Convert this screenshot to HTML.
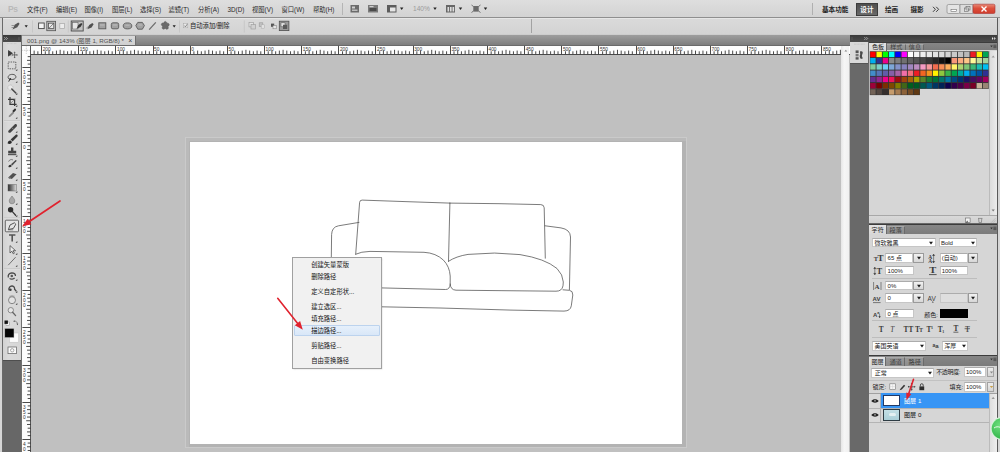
<!DOCTYPE html>
<html lang="zh-CN">
<head>
<meta charset="utf-8">
<title>Photoshop CS5 - 001.png</title>
<style>
*{margin:0;padding:0;box-sizing:border-box}
html,body{width:1000px;height:452px;overflow:hidden;background:#c0c0c0}
body{font-family:"Liberation Sans","Noto Sans CJK SC",sans-serif;font-size:6.3px;color:#222;position:relative}
#app{position:absolute;left:0;top:0;width:1000px;height:452px;overflow:hidden;background:#c0c0c0}
#app div,#app svg.abs{position:absolute}
.t{height:10px;line-height:10px;white-space:nowrap;color:#2a2a2a}
.w{color:#fff}
.b{font-weight:bold}
.rl{font-size:4.8px;color:#333;height:8px;line-height:8px}
</style>
</head>
<body>
<div id="app">
<!-- application bar -->
<div style="left:0.0px;top:0.0px;width:1000.0px;height:17.0px;background:linear-gradient(#dedede,#d3d3d3);"></div>
<div style="left:0.0px;top:17.0px;width:1000.0px;height:1.0px;background:#8f8f8f;"></div>
<div class="t b" style="left:8px;top:3.5px;font-size:8.5px;color:#b9b9b9;letter-spacing:-0.3px">Ps</div>
<div class="t " style="left:27.0px;top:4.6px;">文件(F)</div>
<div class="t " style="left:56.0px;top:4.6px;">编辑(E)</div>
<div class="t " style="left:84.5px;top:4.6px;">图像(I)</div>
<div class="t " style="left:112.0px;top:4.6px;">图层(L)</div>
<div class="t " style="left:140.0px;top:4.6px;">选择(S)</div>
<div class="t " style="left:168.5px;top:4.6px;">滤镜(T)</div>
<div class="t " style="left:198.0px;top:4.6px;">分析(A)</div>
<div class="t " style="left:227.5px;top:4.6px;">3D(D)</div>
<div class="t " style="left:252.0px;top:4.6px;">视图(V)</div>
<div class="t " style="left:281.5px;top:4.6px;">窗口(W)</div>
<div class="t " style="left:313.0px;top:4.6px;">帮助(H)</div>
<div style="left:341.5px;top:3.0px;width:1.0px;height:12.0px;background:#b5b5b5;"></div>
<svg class="abs" style="left:349px;top:3px" width="150" height="12" viewBox="349 3 150 12"><rect x="350.5" y="5" width="8.5" height="7.5" fill="#6b6b6b"/><rect x="352" y="6.5" width="3" height="2" fill="#cfcfcf"/><rect x="352" y="9.5" width="5.5" height="1.5" fill="#bdbdbd"/><rect x="368" y="5" width="10" height="7.5" fill="#7a7a7a"/><rect x="369.5" y="8" width="7" height="3" fill="#4a4a4a"/><rect x="369.5" y="6" width="4" height="1.2" fill="#d0d0d0"/><rect x="387" y="5" width="9.5" height="7.5" fill="#5c5c5c"/><rect x="390" y="7.5" width="5.5" height="4" fill="#e6e6e6"/><path d="M400 7.5h3.4l-1.7 2.4z" fill="#222"/><path d="M433.3 7.5h3.4l-1.7 2.4z" fill="#222"/><rect x="446" y="5" width="9" height="7.5" fill="#666"/><rect x="447.5" y="7" width="1.6" height="4.5" fill="#ddd"/><rect x="450" y="7" width="1.6" height="4.5" fill="#ddd"/><rect x="452.5" y="7" width="1.6" height="4.5" fill="#ddd"/><path d="M458.8 7.5h3.4l-1.7 2.4z" fill="#222"/><path d="M471.5 5l2 1.5h5l2-1.5M471.5 12.5l2-1.5h5l2 1.5" stroke="#666" stroke-width="0.9" fill="none"/><rect x="473.3" y="6.3" width="5.4" height="5" fill="#6a6a6a"/><path d="M483.8 7.5h3.4l-1.7 2.4z" fill="#222"/></svg>
<div class="t " style="left:413.0px;top:4.3px;color:#9b9b9b;font-size:6.6px">140%</div>
<div style="left:812.0px;top:3.0px;width:1.0px;height:12.0px;background:#b0b0b0;"></div>
<div class="t b" style="left:822.0px;top:4.6px;color:#222;font-size:6.6px">基本功能</div>
<div style="left:856.0px;top:3.0px;width:21.5px;height:12.5px;background:linear-gradient(#4e4e4e,#6a6a6a);border:0.5px solid #3c3c3c"></div>
<div class="t b w" style="left:860.3px;top:4.6px;font-size:6.6px">设计</div>
<div class="t b" style="left:885.0px;top:4.6px;color:#222;font-size:6.6px">绘画</div>
<div class="t b" style="left:910.5px;top:4.6px;color:#222;font-size:6.6px">摄影</div>
<svg class="abs" style="left:931px;top:5px" width="10" height="9" viewBox="931 5 10 9"><path d="M933 6.800l2.400 2.500-2.400 2.500M936.200 6.800l2.400 2.500-2.400 2.500" stroke="#3c3c3c" stroke-width="1" fill="none"/></svg>
<svg class="abs" style="left:946px;top:3px" width="51" height="12" viewBox="946 3 51 12"><rect x="947" y="4.500" width="13" height="9" rx="1.500" fill="#e4e4e4" stroke="#8a8a8a" stroke-width="0.700"/><rect x="960" y="4.500" width="13" height="9" fill="#dcdcdc" stroke="#8a8a8a" stroke-width="0.700"/><defs><linearGradient id="cl" x1="0" y1="0" x2="0" y2="1"><stop offset="0" stop-color="#e88a76"/><stop offset="0.450" stop-color="#dc4f3c"/><stop offset="1" stop-color="#cf3d2c"/></linearGradient></defs><rect x="973" y="4.200" width="22" height="9.300" rx="1.500" fill="url(#cl)" stroke="#a33" stroke-width="0.600"/><rect x="951" y="9.500" width="5.500" height="2" fill="#fff" stroke="#555" stroke-width="0.500"/><rect x="964.500" y="8" width="4" height="3.500" fill="#eee" stroke="#666" stroke-width="0.600"/><rect x="966" y="6.500" width="4" height="3.500" fill="none" stroke="#666" stroke-width="0.600"/><path d="M981.500 6.500l5 5M986.500 6.500l-5 5" stroke="#fff" stroke-width="1.400"/></svg>
<!-- options bar -->
<div style="left:0.0px;top:18.0px;width:1000.0px;height:17.0px;background:linear-gradient(#dadada,#d3d3d3);"></div>
<div style="left:0.0px;top:33.6px;width:1000.0px;height:1.4px;background:#cdcdcd;"></div>
<div style="left:531.2px;top:18.5px;width:0.7px;height:14.5px;background:#a2a2a2;"></div>
<div style="left:0.0px;top:18.0px;width:1000.0px;height:0.8px;background:#e6e6e6;"></div>
<!-- tab bar -->
<div style="left:2.5px;top:35.0px;width:847.0px;height:10.6px;background:linear-gradient(#9e9e9e,#7a7a7a);"></div>
<div style="left:22.0px;top:35.5px;width:113.7px;height:10.0px;background:linear-gradient(#d9d9d9,#cfcfcf);border-right:0.6px solid #6e6e6e"></div>
<div class="t " style="left:27.0px;top:35.7px;color:#505050;font-size:6.200px;letter-spacing:-0.020px">001.png @ 143% (图层 1, RGB/8) *</div>
<div class="t " style="left:128.3px;top:35.6px;color:#444;font-size:7px">×</div>
<!-- rulers -->
<div style="left:22.0px;top:45.4px;width:827.5px;height:9.2px;background:#fdfdfd;border-top:0.6px solid #6a6a6a;border-bottom:0.6px solid #4a4a4a"></div>
<div style="left:22.0px;top:46.0px;width:8.7px;height:406.0px;background:#fdfdfd;border-right:0.6px solid #555"></div>
<svg class="abs" style="left:0;top:0" width="850" height="452" viewBox="0 0 850 452"><path d="M34.15 50.6V54.2M37.86 51.3V54.2M41.50 45.900V54.200M45.30 51.3V54.2M49.01 50.6V54.2M52.73 51.3V54.2M56.44 50.6V54.2M60.16 49.8V54.2M63.87 50.6V54.2M67.59 51.3V54.2M71.30 50.6V54.2M75.02 51.3V54.2M78.50 45.900V54.200M82.45 51.3V54.2M86.17 50.6V54.2M89.88 51.3V54.2M93.60 50.6V54.2M97.31 49.8V54.2M101.03 50.6V54.2M104.74 51.3V54.2M108.46 50.6V54.2M112.17 51.3V54.2M115.50 45.900V54.200M119.61 51.3V54.2M123.32 50.6V54.2M127.04 51.3V54.2M130.75 50.6V54.2M134.47 49.8V54.2M138.18 50.6V54.2M141.90 51.3V54.2M145.61 50.6V54.2M149.33 51.3V54.2M153.50 45.900V54.200M156.76 51.3V54.2M160.48 50.6V54.2M164.19 51.3V54.2M167.91 50.6V54.2M171.62 49.8V54.2M175.34 50.6V54.2M179.05 51.3V54.2M182.77 50.6V54.2M186.48 51.3V54.2M190.50 45.900V54.200M193.92 51.3V54.2M197.63 50.6V54.2M201.35 51.3V54.2M205.06 50.6V54.2M208.78 49.8V54.2M212.49 50.6V54.2M216.21 51.3V54.2M219.92 50.6V54.2M223.64 51.3V54.2M227.50 45.900V54.200M231.07 51.3V54.2M234.79 50.6V54.2M238.50 51.3V54.2M242.22 50.6V54.2M245.93 49.8V54.2M249.65 50.6V54.2M253.36 51.3V54.2M257.08 50.6V54.2M260.79 51.3V54.2M264.50 45.900V54.200M268.23 51.3V54.2M271.94 50.6V54.2M275.66 51.3V54.2M279.37 50.6V54.2M283.09 49.8V54.2M286.80 50.6V54.2M290.52 51.3V54.2M294.23 50.6V54.2M297.95 51.3V54.2M301.50 45.900V54.200M305.38 51.3V54.2M309.10 50.6V54.2M312.81 51.3V54.2M316.53 50.6V54.2M320.24 49.8V54.2M323.96 50.6V54.2M327.67 51.3V54.2M331.39 50.6V54.2M335.10 51.3V54.2M338.50 45.900V54.200M342.54 51.3V54.2M346.25 50.6V54.2M349.97 51.3V54.2M353.68 50.6V54.2M357.40 49.8V54.2M361.11 50.6V54.2M364.83 51.3V54.2M368.54 50.6V54.2M372.26 51.3V54.2M375.50 45.900V54.200M379.69 51.3V54.2M383.41 50.6V54.2M387.12 51.3V54.2M390.84 50.6V54.2M394.55 49.8V54.2M398.27 50.6V54.2M401.98 51.3V54.2M405.70 50.6V54.2M409.41 51.3V54.2M413.50 45.900V54.200M416.85 51.3V54.2M420.56 50.6V54.2M424.28 51.3V54.2M427.99 50.6V54.2M431.71 49.8V54.2M435.42 50.6V54.2M439.14 51.3V54.2M442.85 50.6V54.2M446.57 51.3V54.2M450.50 45.900V54.200M454.00 51.3V54.2M457.72 50.6V54.2M461.43 51.3V54.2M465.15 50.6V54.2M468.86 49.8V54.2M472.58 50.6V54.2M476.29 51.3V54.2M480.01 50.6V54.2M483.72 51.3V54.2M487.50 45.900V54.200M491.16 51.3V54.2M494.87 50.6V54.2M498.59 51.3V54.2M502.30 50.6V54.2M506.02 49.8V54.2M509.73 50.6V54.2M513.45 51.3V54.2M517.16 50.6V54.2M520.88 51.3V54.2M524.50 45.900V54.200M528.31 51.3V54.2M532.03 50.6V54.2M535.74 51.3V54.2M539.46 50.6V54.2M543.17 49.8V54.2M546.89 50.6V54.2M550.60 51.3V54.2M554.32 50.6V54.2M558.03 51.3V54.2M561.50 45.900V54.200M565.47 51.3V54.2M569.18 50.6V54.2M572.90 51.3V54.2M576.61 50.6V54.2M580.33 49.8V54.2M584.04 50.6V54.2M587.76 51.3V54.2M591.47 50.6V54.2M595.19 51.3V54.2M598.50 45.900V54.200M602.62 51.3V54.2M606.34 50.6V54.2M610.05 51.3V54.2M613.77 50.6V54.2M617.48 49.8V54.2M621.20 50.6V54.2M624.91 51.3V54.2M628.63 50.6V54.2M632.34 51.3V54.2M636.50 45.900V54.200M639.78 51.3V54.2M643.49 50.6V54.2M647.21 51.3V54.2M650.92 50.6V54.2M654.64 49.8V54.2M658.35 50.6V54.2M662.07 51.3V54.2M665.78 50.6V54.2M669.50 51.3V54.2M673.50 45.900V54.200M676.93 51.3V54.2M680.65 50.6V54.2M684.36 51.3V54.2M688.08 50.6V54.2M691.79 49.8V54.2M695.51 50.6V54.2M699.22 51.3V54.2M702.94 50.6V54.2M706.65 51.3V54.2M710.50 45.900V54.200M714.09 51.3V54.2M717.80 50.6V54.2M721.52 51.3V54.2M725.23 50.6V54.2M728.95 49.8V54.2M732.66 50.6V54.2M736.38 51.3V54.2M740.09 50.6V54.2M743.81 51.3V54.2M747.50 45.900V54.200M751.24 51.3V54.2M754.96 50.6V54.2M758.67 51.3V54.2M762.39 50.6V54.2M766.10 49.8V54.2M769.82 50.6V54.2M773.53 51.3V54.2M777.25 50.6V54.2M780.96 51.3V54.2M784.50 45.900V54.200M788.40 51.3V54.2M792.11 50.6V54.2M795.83 51.3V54.2M799.54 50.6V54.2M803.26 49.8V54.2M806.97 50.6V54.2M810.69 51.3V54.2M814.40 50.6V54.2M818.12 51.3V54.2M821.50 45.900V54.200M825.55 51.3V54.2M829.27 50.6V54.2M832.98 51.3V54.2M836.70 50.6V54.2M840.41 49.8V54.2" stroke="#2a2a2a" stroke-width="0.85" fill="none"/><path d="M27.7 56.64H30.6M27 60.36H30.6M27.7 64.07H30.6M22.4 67.50H30.4M27.7 71.51H30.6M27 75.22H30.6M27.7 78.94H30.6M27 82.65H30.6M26.2 86.37H30.6M27 90.08H30.6M27.7 93.80H30.6M27 97.51H30.6M27.7 101.23H30.6M22.4 104.50H30.4M27.7 108.66H30.6M27 112.38H30.6M27.7 116.09H30.6M27 119.81H30.6M26.2 123.52H30.6M27 127.24H30.6M27.7 130.95H30.6M27 134.67H30.6M27.7 138.38H30.6M22.4 142.50H30.4M27.7 145.82H30.6M27 149.53H30.6M27.7 153.25H30.6M27 156.96H30.6M26.2 160.68H30.6M27 164.39H30.6M27.7 168.11H30.6M27 171.82H30.6M27.7 175.54H30.6M22.4 179.50H30.4M27.7 182.97H30.6M27 186.69H30.6M27.7 190.40H30.6M27 194.12H30.6M26.2 197.83H30.6M27 201.55H30.6M27.7 205.26H30.6M27 208.98H30.6M27.7 212.69H30.6M22.4 216.50H30.4M27.7 220.13H30.6M27 223.84H30.6M27.7 227.56H30.6M27 231.27H30.6M26.2 234.99H30.6M27 238.70H30.6M27.7 242.42H30.6M27 246.13H30.6M27.7 249.85H30.6M22.4 253.50H30.4M27.7 257.28H30.6M27 261.00H30.6M27.7 264.71H30.6M27 268.43H30.6M26.2 272.14H30.6M27 275.86H30.6M27.7 279.57H30.6M27 283.29H30.6M27.7 287.00H30.6M22.4 290.50H30.4M27.7 294.44H30.6M27 298.15H30.6M27.7 301.87H30.6M27 305.58H30.6M26.2 309.30H30.6M27 313.01H30.6M27.7 316.73H30.6M27 320.44H30.6M27.7 324.16H30.6M22.4 327.50H30.4M27.7 331.59H30.6M27 335.31H30.6M27.7 339.02H30.6M27 342.74H30.6M26.2 346.45H30.6M27 350.17H30.6M27.7 353.88H30.6M27 357.60H30.6M27.7 361.31H30.6M22.4 365.50H30.4M27.7 368.75H30.6M27 372.46H30.6M27.7 376.18H30.6M27 379.89H30.6M26.2 383.61H30.6M27 387.32H30.6M27.7 391.04H30.6M27 394.75H30.6M27.7 398.47H30.6M22.4 402.50H30.4M27.7 405.90H30.6M27 409.62H30.6M27.7 413.33H30.6M27 417.05H30.6M26.2 420.76H30.6M27 424.48H30.6M27.7 428.19H30.6M27 431.91H30.6M27.7 435.62H30.6M22.4 439.50H30.4M27.7 443.06H30.6M27 446.77H30.6M27.7 450.49H30.6" stroke="#2a2a2a" stroke-width="0.85" fill="none"/><path d="M26.3 46.5V54M22.4 50.3H30.4" stroke="#888" stroke-width="0.5" stroke-dasharray="0.8 0.8" fill="none"/></svg>
<div class="t rl" style="left:42.7px;top:45.9px">200</div>
<div class="t rl" style="left:79.8px;top:45.9px">150</div>
<div class="t rl" style="left:117.0px;top:45.9px">100</div>
<div class="t rl" style="left:154.1px;top:45.9px">50</div>
<div class="t rl" style="left:191.3px;top:45.9px">0</div>
<div class="t rl" style="left:228.5px;top:45.9px">50</div>
<div class="t rl" style="left:265.6px;top:45.9px">100</div>
<div class="t rl" style="left:302.8px;top:45.9px">150</div>
<div class="t rl" style="left:339.9px;top:45.9px">200</div>
<div class="t rl" style="left:377.1px;top:45.9px">250</div>
<div class="t rl" style="left:414.2px;top:45.9px">300</div>
<div class="t rl" style="left:451.4px;top:45.9px">350</div>
<div class="t rl" style="left:488.5px;top:45.9px">400</div>
<div class="t rl" style="left:525.7px;top:45.9px">450</div>
<div class="t rl" style="left:562.9px;top:45.9px">500</div>
<div class="t rl" style="left:600.0px;top:45.9px">550</div>
<div class="t rl" style="left:637.2px;top:45.9px">600</div>
<div class="t rl" style="left:674.3px;top:45.9px">650</div>
<div class="t rl" style="left:711.5px;top:45.9px">700</div>
<div class="t rl" style="left:748.6px;top:45.9px">750</div>
<div class="t rl" style="left:785.8px;top:45.9px">800</div>
<div class="t rl" style="left:822.9px;top:45.9px">850</div>
<div class="t rl" style="left:23px;top:69.3px">1</div>
<div class="t rl" style="left:23px;top:74.3px">0</div>
<div class="t rl" style="left:23px;top:79.3px">0</div>
<div class="t rl" style="left:23px;top:106.4px">5</div>
<div class="t rl" style="left:23px;top:111.4px">0</div>
<div class="t rl" style="left:23px;top:143.6px">0</div>
<div class="t rl" style="left:23px;top:180.8px">5</div>
<div class="t rl" style="left:23px;top:185.8px">0</div>
<div class="t rl" style="left:23px;top:217.9px">1</div>
<div class="t rl" style="left:23px;top:222.9px">0</div>
<div class="t rl" style="left:23px;top:227.9px">0</div>
<div class="t rl" style="left:23px;top:255.1px">1</div>
<div class="t rl" style="left:23px;top:260.1px">5</div>
<div class="t rl" style="left:23px;top:265.1px">0</div>
<div class="t rl" style="left:23px;top:292.2px">2</div>
<div class="t rl" style="left:23px;top:297.2px">0</div>
<div class="t rl" style="left:23px;top:302.2px">0</div>
<div class="t rl" style="left:23px;top:329.4px">2</div>
<div class="t rl" style="left:23px;top:334.4px">5</div>
<div class="t rl" style="left:23px;top:339.4px">0</div>
<div class="t rl" style="left:23px;top:366.5px">3</div>
<div class="t rl" style="left:23px;top:371.5px">0</div>
<div class="t rl" style="left:23px;top:376.5px">0</div>
<div class="t rl" style="left:23px;top:403.7px">3</div>
<div class="t rl" style="left:23px;top:408.7px">5</div>
<div class="t rl" style="left:23px;top:413.7px">0</div>
<div class="t rl" style="left:23px;top:440.8px">4</div>
<div class="t rl" style="left:23px;top:445.8px">0</div>
<div class="t rl" style="left:23px;top:450.8px">0</div>
<!-- canvas + document -->
<div style="left:31.0px;top:54.8px;width:810.3px;height:398.0px;background:#c0c0c0;"></div>
<div style="left:841.3px;top:46.0px;width:8.2px;height:406.0px;background:linear-gradient(90deg,#e6e6e6,#f6f6f6 40%,#f0f0f0);"></div>
<svg class="abs" style="left:842px;top:47px" width="8" height="8" viewBox="0 0 8 8"><path d="M2.400 4.600L3.800 2.800L5.200 4.600z" fill="#8a8a8a"/></svg>
<div style="left:185.4px;top:137.2px;width:501.4px;height:310.8px;background:#cacaca;"></div>
<div style="left:186.4px;top:138.2px;width:499.4px;height:308.8px;background:#b3b3b3;border-top:3.400px solid #bababa;border-left:3.600px solid #bababa"></div>
<div style="left:190.0px;top:141.6px;width:492.0px;height:302.0px;background:#fff;"></div>
<!-- options bar icons -->
<svg class="abs" style="left:0;top:18px" width="300" height="17" viewBox="0 18 300 17"><path d="M12.5 29.5l2.2-4.8 3.6-2.2 1.3 1.2-2.3 3.600z" fill="#555"/><path d="M11.500 25.500h3M11.500 27.500h2.400" stroke="#777" stroke-width="0.700"/><path d="M24.600 25.300h3.200l-1.600 2.300z" fill="#222"/><path d="M32.500 20.500v12" stroke="#bdbdbd" stroke-width="0.600"/><rect x="38.600" y="23" width="5.600" height="5.600" fill="#f4f4f4" stroke="#444" stroke-width="0.900"/><rect x="46.800" y="21.300" width="8.800" height="9.400" fill="#bcbcbc" stroke="#555" stroke-width="0.800"/><rect x="48.600" y="23.200" width="5.200" height="5.400" fill="#e9e9e9" stroke="#444" stroke-width="0.700"/><path d="M49 28.200l4.400-4.600" stroke="#555" stroke-width="0.700"/><rect x="59.800" y="23.400" width="4.600" height="5" fill="#ececec" stroke="#a8a8a8" stroke-width="0.700"/><path d="M68.300 20.500v12" stroke="#bdbdbd" stroke-width="0.600"/><rect x="71.200" y="21" width="12" height="10" fill="#c2c2c2" stroke="#4a4a4a" stroke-width="0.900"/><rect x="72.600" y="22.600" width="5.400" height="6.400" fill="#e6e6e6" stroke="#666" stroke-width="0.600"/><path d="M76.500 29l1.800-4 3-1.900 1.100 1-1.900 3z" fill="#3a3a3a"/><path d="M87.300 29.300l1.900-4.200 3.200-2 1.200 1.100-2 3.200z" fill="#505050"/><path d="M86.300 28.500c1-2.500 2-0.500 3-2.500" stroke="#666" stroke-width="0.600" fill="none"/><rect x="98.800" y="22.800" width="7" height="6" fill="#a2a2a2" stroke="#5a5a5a" stroke-width="0.900"/><path d="M100 25h4.600" stroke="#c4c4c4" stroke-width="0.800"/><rect x="111.300" y="22.800" width="7.400" height="6" rx="1.600" fill="#a2a2a2" stroke="#5a5a5a" stroke-width="0.900"/><path d="M113 25h4" stroke="#c4c4c4" stroke-width="0.800"/><ellipse cx="127.500" cy="25.900" rx="4.300" ry="3" fill="#a2a2a2" stroke="#5a5a5a" stroke-width="0.900"/><path d="M125.500 25.200h4" stroke="#c4c4c4" stroke-width="0.800"/><path d="M137.800 22.400h4.600l2 3.200-2 3.600h-4.600l-2-3.600z" fill="#a2a2a2" stroke="#5a5a5a" stroke-width="0.900"/><path d="M138.300 25h3.600" stroke="#c4c4c4" stroke-width="0.800"/><path d="M149.200 29.600l6.600-7.200" stroke="#6c6c6c" stroke-width="1.300"/><path d="M165.200 21.400c1 0 1.400.8 1.600 1.800 1-.2 2.200.2 2.400 1.200.2 1-.6 1.600-1.400 2 .6.8.8 2-.2 2.600-1 .600-1.800 0-2.400-.800-.600.800-1.600 1.400-2.600.600-.800-.800-.400-1.800.200-2.600-1-.400-1.800-1.200-1.400-2.200.400-1 1.400-1.200 2.400-.800.200-1 .600-1.800 1.400-1.800z" fill="#6a6a6a" stroke="#565656" stroke-width="0.500"/><path d="M172.600 25.300h3.200l-1.600 2.300z" fill="#222"/><path d="M179.500 20.500v12" stroke="#bdbdbd" stroke-width="0.600"/><rect x="183.600" y="23.400" width="4.200" height="4.400" fill="#e8e8e8" stroke="#a5a5a5" stroke-width="0.500"/><path d="M184.400 25.600l1 1.300 1.900-2.800" stroke="#666" stroke-width="0.700" fill="none"/><path d="M244.300 20.500v12" stroke="#bdbdbd" stroke-width="0.600"/><rect x="249" y="22.500" width="4.400" height="4.400" fill="#e4e4e4" stroke="#999" stroke-width="0.600"/><rect x="251" y="24.600" width="4.400" height="4.400" fill="#d0d0d0" stroke="#999" stroke-width="0.600"/><rect x="259.200" y="22.800" width="3.600" height="3.600" fill="#c2c2c2" stroke="#999" stroke-width="0.600"/><rect x="261.200" y="24.800" width="3.400" height="3.400" fill="#e2e2e2" stroke="#aaa" stroke-width="0.500"/><rect x="271" y="23.600" width="3.200" height="3.200" fill="#555"/><rect x="273" y="25.600" width="3.200" height="3.200" fill="#e6e6e6" stroke="#777" stroke-width="0.500"/><rect x="279.300" y="21.200" width="9.600" height="9.400" fill="#9a9a9a" stroke="#505050" stroke-width="0.800"/><rect x="281" y="22.800" width="4" height="4" fill="#e2e2e2" stroke="#555" stroke-width="0.500"/><rect x="283" y="24.800" width="4.200" height="4.200" fill="#5a5a5a"/></svg>
<div class="t " style="left:190.0px;top:20.8px;color:#1e1e1e;font-size:6.3px">自动添加/删除</div>
<!-- toolbox -->
<div style="left:0.0px;top:17.5px;width:2.0px;height:435.0px;background:#d6d6d6;"></div>
<div style="left:2.0px;top:17.5px;width:0.7px;height:435.0px;background:#6a6a6a;"></div>
<div style="left:2.7px;top:35.0px;width:19.0px;height:7.0px;background:linear-gradient(#3a3a3a,#4c4c4c);"></div>
<div style="left:2.7px;top:42.0px;width:18.8px;height:318.0px;background:linear-gradient(90deg,#d2d2d2,#dadada 30%,#d6d6d6);"></div>
<div style="left:21.4px;top:35.0px;width:0.7px;height:417.0px;background:#707070;"></div>
<div style="left:2.7px;top:360.0px;width:18.8px;height:92.0px;background:#676767;"></div>
<div style="left:2.7px;top:360.0px;width:18.8px;height:0.8px;background:#4e4e4e;"></div>
<svg class="abs" style="left:0;top:35px" width="22" height="330" viewBox="0 35 22 330"><path d="M4.3 37.2l1.3 1.3-1.3 1.3M6.2 37.2l1.3 1.3-1.3 1.3" stroke="#ddd" stroke-width="0.6" fill="none"/><path d="M19 37v3" stroke="#999" stroke-width="0.5" stroke-dasharray="0.6 0.6"/><path d="M7 43.6h10" stroke="#b5b5b5" stroke-width="0.6" stroke-dasharray="0.7 0.7"/><path d="M4 120.5h16M4 218h16M4 268.5h16" stroke="#bcbcbc" stroke-width="0.7"/><path d="M4 121.2h16M4 218.7h16M4 269.2h16" stroke="#e6e6e6" stroke-width="0.6"/><path d="M15.6 70.7l1.700 0l0 -1.700zM15.6 82.7l1.700 0l0 -1.700zM15.6 94.7l1.700 0l0 -1.700zM15.6 106.7l1.700 0l0 -1.700zM15.6 118.7l1.700 0l0 -1.700zM15.6 132.7l1.700 0l0 -1.700zM15.6 144.7l1.700 0l0 -1.700zM15.6 156.7l1.700 0l0 -1.700zM15.6 168.7l1.700 0l0 -1.700zM15.6 180.7l1.700 0l0 -1.700zM15.6 192.7l1.700 0l0 -1.700zM15.6 204.7l1.700 0l0 -1.700zM15.6 216.7l1.700 0l0 -1.700zM15.6 230.7l1.700 0l0 -1.700zM15.6 242.7l1.700 0l0 -1.700zM15.6 254.7l1.700 0l0 -1.700zM15.6 266.7l1.700 0l0 -1.700zM15.6 280.7l1.700 0l0 -1.700zM15.6 292.7l1.700 0l0 -1.700zM15.6 304.7l1.700 0l0 -1.700z" fill="#333"/><path d="M8.2 50.2v6.2l1.8-1.7 1.5 2.4" fill="#3d3d3d"/><path d="M8.2 50v6.4l4.8-3.2z" fill="#3d3d3d"/><path d="M14.6 52.4v5M12.1 54.9h5" stroke="#555" stroke-width="0.8"/><path d="M14.6 51.6l-1 1.2h2zM14.6 58.2l-1-1.2h2zM11.3 54.9l1.2-1v2zM17.9 54.9l-1.2-1v2z" fill="#555"/><rect x="8.2" y="62" width="7.6" height="6.8" fill="none" stroke="#4a4a4a" stroke-width="0.8" stroke-dasharray="1.5 0.9"/><path d="M9 79c-1.6-1.2-1.2-4.2 2.6-4.6 3.6-.3 5.2 2 3.8 3.8-1.2 1.5-4 1.6-5.4.8" fill="none" stroke="#444" stroke-width="0.9"/><path d="M10 79l-1.3 2.6" stroke="#333" stroke-width="1"/><circle cx="10.2" cy="79" r="1" fill="#333"/><circle cx="10.4" cy="87.6" r="2.6" fill="#e8e8e8" stroke="#aaa" stroke-width="0.7" stroke-dasharray="1 0.6"/><path d="M11.8 89l4 4" stroke="#4a4a4a" stroke-width="1.6" stroke-linecap="round"/><path d="M10 97v7.4h6.6M8 99.4h6.6v6.6" stroke="#3a3a3a" stroke-width="1.2" fill="none"/><path d="M9.2 104.8l6-6" stroke="#666" stroke-width="0.6"/><path d="M8.6 117.2l.5-1.8 3.8-3.8 1.3 1.3-3.8 3.8z" fill="#8a8a8a"/><path d="M12.3 111l2.2-2.2c.8-.8 2.2.6 1.4 1.4l-2.2 2.2z" fill="#2f2f2f"/><path d="M8.6 130.4l6-6c1.4-1.3 3.3.6 2 2l-6 6c-1.4 1.3-3.3-.6-2-2z" fill="#444"/><path d="M11.6 127.4l2 2" stroke="#999" stroke-width="0.8"/><path d="M7.600 143.600c.2-2.200 1.400-3.200 3-3l1.200 1.200c.2 1.800-1.700 2.800-4.200 1.800z" fill="#2a2a2a"/><path d="M10.600 139.600l5.200-4.800c1.200-.8 2.400.4 1.600 1.600l-4.800 5.200z" fill="#3a3a3a"/><path d="M11 147.600h2.400v3.200h2.800v2.600H8.2v-2.600H11z" fill="#444"/><rect x="8" y="154" width="8.400" height="1.200" fill="#555"/><path d="M8.400 167c.2-1.600 1-2.400 2.400-2.200l.8.8c.2 1.300-1.300 2-3.200 1.400z" fill="#333"/><path d="M11 164.200l4.400-4c.7-.6 1.500.2.9 1l-4 4.200z" fill="#4a4a4a"/><path d="M8.600 161.600a3 3 0 0 1 4.400-1.600" stroke="#555" stroke-width="0.700" fill="none"/><path d="M8.200 177.600l4.800-4.600 3.600 1.200-4.800 4.800h-2.400z" fill="#505050"/><path d="M8.200 177.600l1.200 1.400h2.400l-1.400-1.600z" fill="#8a8a8a"/><defs><linearGradient id="gr" x1="0" x2="1"><stop offset="0" stop-color="#2a2a2a"/><stop offset="1" stop-color="#dcdcdc"/></linearGradient></defs><rect x="8" y="184.400" width="8.400" height="6.600" fill="url(#gr)" stroke="#6a6a6a" stroke-width="0.500"/><path d="M12 196c1.600 2.200 2.800 3.400 2.800 5a2.800 2.800 0 0 1-5.600 0c0-1.600 1.200-2.800 2.800-5z" fill="#a8a8a8" stroke="#777" stroke-width="0.600"/><circle cx="10.600" cy="209.800" r="2.700" fill="#2e2e2e"/><path d="M12.400 211.600l3.200 3.600" stroke="#3a3a3a" stroke-width="1.300" stroke-linecap="round"/><rect x="5.300" y="220.200" width="13.200" height="11.600" rx="0.800" fill="#e4e4e4" stroke="#5c5c5c" stroke-width="0.900"/><path d="M8.400 229.600l1.600-4.600 4.400-2.200 1.400 1.400-2.400 4.200z" fill="none" stroke="#444" stroke-width="0.900"/><path d="M8.200 229.800h5" stroke="#555" stroke-width="0.700"/><path d="M9 234.200h6.400v1.500h-2.400v5.800h-1.600v-5.800H9z" fill="#555"/><path d="M10 245.600v7.400l1.900-1.800 1.300 2.600 1.200-.6-1.300-2.500h2.500z" fill="#ececec" stroke="#3a3a3a" stroke-width="0.700"/><path d="M8.200 265.200l7.400-8" stroke="#707070" stroke-width="1"/><path d="M8.400 277.400c-.8-2 .6-4.400 3.400-4.600 2.600 0 3.800 1.600 3.600 3.200M14.600 277.800c-1.200 1.600-3.800 1.800-5 .6" stroke="#484848" stroke-width="1.300" fill="none"/><circle cx="11.800" cy="276" r="1.300" fill="#555"/><path d="M9 290.400c-.6-2.400 1-4.600 3.200-4.400 1.800.2 2.600 1.800 2.400 3.200l1.800 2.200" stroke="#484848" stroke-width="1.300" fill="none"/><circle cx="10.400" cy="289.800" r="1.300" fill="#3c3c3c"/><circle cx="12" cy="300.200" r="3.500" fill="#e2e2e2" stroke="#7a7a7a" stroke-width="0.900"/><path d="M10.200 297v-1.400M12 296.700v-1.700M13.800 297v-1.400" stroke="#7a7a7a" stroke-width="0.800"/><circle cx="10.800" cy="310.200" r="2.700" fill="#e6e6e6" stroke="#777" stroke-width="0.800"/><path d="M12.600 312.200l3 3.400" stroke="#666" stroke-width="1.300" stroke-linecap="round"/><rect x="6" y="322" width="3.200" height="3.200" fill="#f2f2f2" stroke="#777" stroke-width="0.400"/><rect x="4.500" y="320.500" width="3.400" height="3.400" fill="#111"/><path d="M14 321.200c2-.4 3.400.8 3.400 3" stroke="#555" stroke-width="0.600" fill="none"/><path d="M14.400 320.200l-1.200 1 1.400.8zM16.600 323.800l.8 1.400.8-1.400z" fill="#444"/><rect x="9.400" y="333" width="9.200" height="9.200" fill="#fbfbfb" stroke="#bdbdbd" stroke-width="0.500"/><rect x="4.800" y="328.400" width="9.200" height="9.200" fill="#050505" stroke="#c8c8c8" stroke-width="0.500"/><rect x="8" y="347" width="8.400" height="6.600" fill="#fafafa" stroke="#6e6e6e" stroke-width="0.800"/><circle cx="12.200" cy="350.300" r="1.700" fill="none" stroke="#777" stroke-width="0.600"/></svg>
<svg class="abs" style="left:0;top:0;z-index:30" width="1000" height="452" viewBox="0 0 1000 452"><path d="M60.0 201.0L28.6 222.0" stroke="#e0222e" stroke-width="1.7" stroke-linecap="round"/><path d="M22.0 226.5L27.6 218.7L31.4 224.3z" fill="#e0222e"/><path d="M277.7 298.3L298.1 323.9" stroke="#e0222e" stroke-width="1.6" stroke-linecap="round"/><path d="M302.8 329.8L294.9 325.2L300.1 321.1z" fill="#e0222e"/><path d="M913.5 379.3L908.5 394.2" stroke="#e0222e" stroke-width="1.6" stroke-linecap="round"/><path d="M906.4 400.4L906.3 392.5L911.3 394.1z" fill="#e0222e"/></svg>
<!-- sofa outline -->
<svg class="abs" style="left:320px;top:190px" width="270" height="130" viewBox="320 190 270 130"><g fill="none" stroke="#4f4f4f" stroke-width="0.75" stroke-linejoin="round" stroke-linecap="round"><path d="M355.700 254.200L359.600 202.400Q359.800 200 362.200 200.100L405 201.600L449.900 203.100"/><path d="M449.900 203.100L448.500 261.300"/><path d="M449.900 203.100L500 203.700L540.800 204.600Q544 204.700 544.200 207.800L545.300 258.200"/><path d="M359 222.400L338.500 225.800Q331.900 227 331.600 234.500L331.300 259"/><path d="M545 225.800L561 227.900Q570.300 229.500 570.500 237L569.400 289.600"/><path d="M355.700 254.200Q361 251.600 370 251.400L424 252.300Q436 253 443.500 260.200Q449.600 266.500 450.200 276L450.200 284Q449.800 289.600 445.500 289.500L381 287.900"/><path d="M448.500 261.300Q456 256.300 468 254.400Q495 251.600 520 254.600Q545 258.600 557 268.500Q563 274.500 563.300 282L563 285.800Q562 291.300 556 291.200L456 290.200Q450.500 290 450.200 284"/><path d="M381 306.800L440 308L511 310.100L564 311.100Q570.500 311 571.300 305.800L572.800 295Q573 290.700 569.400 290.300L563 289.800"/></g></svg>
<!-- context menu -->
<div style="left:292.4px;top:257.2px;width:89.4px;height:111.5px;background:#f1f1f1;border:0.6px solid #a0a0a0;box-shadow:1.2px 1.2px 1.5px rgba(0,0,0,0.18);z-index:5"></div>
<div style="left:294.2px;top:325.4px;width:85.8px;height:10.4px;background:linear-gradient(#e6f0fb,#d9e7f8);border:0.5px solid #bcd3ee;border-radius:1px;z-index:6"></div>
<div class="t " style="left:311.2px;top:259.9px;z-index:7;color:#111;font-size:6.300px">创建矢量蒙版</div>
<div class="t " style="left:311.2px;top:271.5px;z-index:7;color:#111;font-size:6.300px">删除路径</div>
<div class="t " style="left:311.2px;top:287.3px;z-index:7;color:#111;font-size:6.300px">定义自定形状...</div>
<div class="t " style="left:311.2px;top:302.1px;z-index:7;color:#111;font-size:6.300px">建立选区...</div>
<div class="t " style="left:311.2px;top:314.1px;z-index:7;color:#111;font-size:6.300px">填充路径...</div>
<div class="t " style="left:311.2px;top:325.6px;z-index:7;color:#111;font-size:6.300px">描边路径...</div>
<div class="t " style="left:311.2px;top:341.3px;z-index:7;color:#111;font-size:6.300px">剪贴路径...</div>
<div class="t " style="left:311.2px;top:355.7px;z-index:7;color:#111;font-size:6.300px">自由变换路径</div>
<!-- right dock -->
<div style="left:849.5px;top:35.0px;width:148.0px;height:417.0px;background:#696969;"></div>
<div style="left:849.5px;top:35.0px;width:148.0px;height:7.0px;background:linear-gradient(#3c3c3c,#4d4d4d);"></div>
<div style="left:997.3px;top:17.5px;width:0.8px;height:435.0px;background:#5a5a5a;"></div>
<div style="left:998.1px;top:17.5px;width:2.0px;height:435.0px;background:#d6d6d6;"></div>
<svg class="abs" style="left:849px;top:35px" width="150" height="7" viewBox="849 35 150 7"><path d="M864.300 37.100l1.400 1.400-1.400 1.400M866.300 37.100l1.400 1.400-1.400 1.400" stroke="#d8d8d8" stroke-width="0.600" fill="none"/><path d="M992 36.900l1.500 1.600-1.500 1.600zM994.200 36.900l1.500 1.600-1.500 1.600z" fill="#e8e8e8"/><path d="M852 37v3" stroke="#888" stroke-width="0.500" stroke-dasharray="0.600 0.600"/></svg>
<div style="left:850.3px;top:42.4px;width:18.0px;height:21.3px;background:#d9d9d9;border-bottom:0.6px solid #555"></div>
<svg class="abs" style="left:850px;top:42px" width="18" height="22" viewBox="850 42 18 22"><path d="M854 44.200h11" stroke="#b0b0b0" stroke-width="0.600" stroke-dasharray="0.700 0.700"/><rect x="855.600" y="50.400" width="3" height="2.600" fill="#555"/><rect x="855.600" y="53.800" width="3" height="2.600" fill="#777"/><rect x="855.600" y="57.200" width="3" height="2.400" fill="#555"/><path d="M860 51.500c2.400-.8 3.400.8 2.400 2.600-.8 1.600-.6 2.800.6 4.200l-2 .7c-1.400-1.600-1.600-3.200-.8-4.600z" fill="#4a4a4a"/></svg>
<!-- swatches panel -->
<div style="left:868.8px;top:42.0px;width:128.5px;height:181.0px;background:#d6d6d6;"></div>
<div style="left:868.8px;top:41.8px;width:128.5px;height:8.7px;background:linear-gradient(#868686,#7b7b7b);border-top:1.100px solid #3c3c3c"></div><div style="left:869.0px;top:42.9px;width:18.3px;height:7.8px;background:linear-gradient(#e2e2e2,#d8d8d8);border-right:0.6px solid #6a6a6a"></div><div class="t " style="left:872.0px;top:41.9px;color:#222;font-size:6.100px">色板</div><div style="left:887.3px;top:43.7px;width:18.3px;height:6.8px;background:linear-gradient(#999999,#8c8c8c);border-right:0.6px solid #6a6a6a;border-top:0.5px solid #a8a8a8"></div><div class="t " style="left:890.2px;top:42.1px;color:#3c3c3c;font-size:6.100px">样式</div><div style="left:905.6px;top:43.7px;width:18.8px;height:6.8px;background:linear-gradient(#999999,#8c8c8c);border-right:0.6px solid #6a6a6a;border-top:0.5px solid #a8a8a8"></div><div class="t " style="left:908.8px;top:42.1px;color:#3c3c3c;font-size:6.100px">信息</div><svg class="abs" style="left:989px;top:43.8px" width="8" height="6" viewBox="0 0 8 6"><path d="M1.200 1.500h2.600l-1.300 1.700z" fill="#333"/><path d="M4.400 1.200h3M4.400 2.400h3M4.400 3.600h3" stroke="#333" stroke-width="0.600"/></svg>
<svg class="abs" style="left:869px;top:51px" width="121" height="46" viewBox="869 51 121 46"><rect x="869.800" y="51.300" width="118.940" height="37.560" fill="#333"/><rect x="869.800" y="88.800" width="50.100" height="6.300" fill="#333"/><rect x="870.23" y="51.73" width="5.400" height="5.400" fill="#ff0000"/><rect x="876.49" y="51.73" width="5.400" height="5.400" fill="#ffff00"/><rect x="882.75" y="51.73" width="5.400" height="5.400" fill="#00ff00"/><rect x="889.01" y="51.73" width="5.400" height="5.400" fill="#00ffff"/><rect x="895.27" y="51.73" width="5.400" height="5.400" fill="#0000ff"/><rect x="901.53" y="51.73" width="5.400" height="5.400" fill="#ff00ff"/><rect x="907.79" y="51.73" width="5.400" height="5.400" fill="#ffffff"/><rect x="914.05" y="51.73" width="5.400" height="5.400" fill="#f4f4f4"/><rect x="920.31" y="51.73" width="5.400" height="5.400" fill="#eeeeee"/><rect x="926.57" y="51.73" width="5.400" height="5.400" fill="#e8e8e8"/><rect x="932.83" y="51.73" width="5.400" height="5.400" fill="#e2e2e2"/><rect x="939.09" y="51.73" width="5.400" height="5.400" fill="#dbdbdb"/><rect x="945.35" y="51.73" width="5.400" height="5.400" fill="#d3d3d3"/><rect x="951.61" y="51.73" width="5.400" height="5.400" fill="#cacaca"/><rect x="957.87" y="51.73" width="5.400" height="5.400" fill="#c1c1c1"/><rect x="964.13" y="51.73" width="5.400" height="5.400" fill="#b8b8b8"/><rect x="970.39" y="51.73" width="5.400" height="5.400" fill="#ed1c24"/><rect x="976.65" y="51.73" width="5.400" height="5.400" fill="#fff200"/><rect x="982.91" y="51.73" width="5.400" height="5.400" fill="#00a651"/><rect x="870.23" y="57.99" width="5.400" height="5.400" fill="#00aeef"/><rect x="876.49" y="57.99" width="5.400" height="5.400" fill="#2e3192"/><rect x="882.75" y="57.99" width="5.400" height="5.400" fill="#ec008c"/><rect x="889.01" y="57.99" width="5.400" height="5.400" fill="#898989"/><rect x="895.27" y="57.99" width="5.400" height="5.400" fill="#7d7d7d"/><rect x="901.53" y="57.99" width="5.400" height="5.400" fill="#707070"/><rect x="907.79" y="57.99" width="5.400" height="5.400" fill="#626262"/><rect x="914.05" y="57.99" width="5.400" height="5.400" fill="#555555"/><rect x="920.31" y="57.99" width="5.400" height="5.400" fill="#464646"/><rect x="926.57" y="57.99" width="5.400" height="5.400" fill="#363636"/><rect x="932.83" y="57.99" width="5.400" height="5.400" fill="#262626"/><rect x="939.09" y="57.99" width="5.400" height="5.400" fill="#111111"/><rect x="945.35" y="57.99" width="5.400" height="5.400" fill="#000000"/><rect x="951.61" y="57.99" width="5.400" height="5.400" fill="#f7977a"/><rect x="957.87" y="57.99" width="5.400" height="5.400" fill="#f9ad81"/><rect x="964.13" y="57.99" width="5.400" height="5.400" fill="#fdc68a"/><rect x="970.39" y="57.99" width="5.400" height="5.400" fill="#fff79a"/><rect x="976.65" y="57.99" width="5.400" height="5.400" fill="#c4df9b"/><rect x="982.91" y="57.99" width="5.400" height="5.400" fill="#a2d39c"/><rect x="870.23" y="64.25" width="5.400" height="5.400" fill="#82ca9d"/><rect x="876.49" y="64.25" width="5.400" height="5.400" fill="#7bcdc8"/><rect x="882.75" y="64.25" width="5.400" height="5.400" fill="#6ecff6"/><rect x="889.01" y="64.25" width="5.400" height="5.400" fill="#7ea7d8"/><rect x="895.27" y="64.25" width="5.400" height="5.400" fill="#8493ca"/><rect x="901.53" y="64.25" width="5.400" height="5.400" fill="#8882be"/><rect x="907.79" y="64.25" width="5.400" height="5.400" fill="#a187be"/><rect x="914.05" y="64.25" width="5.400" height="5.400" fill="#bc8dbf"/><rect x="920.31" y="64.25" width="5.400" height="5.400" fill="#f49ac2"/><rect x="926.57" y="64.25" width="5.400" height="5.400" fill="#f6989d"/><rect x="932.83" y="64.25" width="5.400" height="5.400" fill="#f26c4f"/><rect x="939.09" y="64.25" width="5.400" height="5.400" fill="#f68e55"/><rect x="945.35" y="64.25" width="5.400" height="5.400" fill="#fbaf5c"/><rect x="951.61" y="64.25" width="5.400" height="5.400" fill="#fff467"/><rect x="957.87" y="64.25" width="5.400" height="5.400" fill="#acd372"/><rect x="964.13" y="64.25" width="5.400" height="5.400" fill="#7cc576"/><rect x="970.39" y="64.25" width="5.400" height="5.400" fill="#3bb878"/><rect x="976.65" y="64.25" width="5.400" height="5.400" fill="#1abbb4"/><rect x="982.91" y="64.25" width="5.400" height="5.400" fill="#00bff3"/><rect x="870.23" y="70.51" width="5.400" height="5.400" fill="#438cca"/><rect x="876.49" y="70.51" width="5.400" height="5.400" fill="#5574b9"/><rect x="882.75" y="70.51" width="5.400" height="5.400" fill="#605ca8"/><rect x="889.01" y="70.51" width="5.400" height="5.400" fill="#855fa8"/><rect x="895.27" y="70.51" width="5.400" height="5.400" fill="#a763a8"/><rect x="901.53" y="70.51" width="5.400" height="5.400" fill="#f06ea9"/><rect x="907.79" y="70.51" width="5.400" height="5.400" fill="#f26d7d"/><rect x="914.05" y="70.51" width="5.400" height="5.400" fill="#ed1c24"/><rect x="920.31" y="70.51" width="5.400" height="5.400" fill="#f26522"/><rect x="926.57" y="70.51" width="5.400" height="5.400" fill="#f7941d"/><rect x="932.83" y="70.51" width="5.400" height="5.400" fill="#fff200"/><rect x="939.09" y="70.51" width="5.400" height="5.400" fill="#8dc73f"/><rect x="945.35" y="70.51" width="5.400" height="5.400" fill="#39b54a"/><rect x="951.61" y="70.51" width="5.400" height="5.400" fill="#00a651"/><rect x="957.87" y="70.51" width="5.400" height="5.400" fill="#00a99d"/><rect x="964.13" y="70.51" width="5.400" height="5.400" fill="#00aeef"/><rect x="970.39" y="70.51" width="5.400" height="5.400" fill="#0072bc"/><rect x="976.65" y="70.51" width="5.400" height="5.400" fill="#0054a6"/><rect x="982.91" y="70.51" width="5.400" height="5.400" fill="#2e3192"/><rect x="870.23" y="76.77" width="5.400" height="5.400" fill="#662d91"/><rect x="876.49" y="76.77" width="5.400" height="5.400" fill="#92278f"/><rect x="882.75" y="76.77" width="5.400" height="5.400" fill="#ec008c"/><rect x="889.01" y="76.77" width="5.400" height="5.400" fill="#ed145b"/><rect x="895.27" y="76.77" width="5.400" height="5.400" fill="#9e0b0f"/><rect x="901.53" y="76.77" width="5.400" height="5.400" fill="#a0410d"/><rect x="907.79" y="76.77" width="5.400" height="5.400" fill="#a36209"/><rect x="914.05" y="76.77" width="5.400" height="5.400" fill="#aba000"/><rect x="920.31" y="76.77" width="5.400" height="5.400" fill="#598527"/><rect x="926.57" y="76.77" width="5.400" height="5.400" fill="#1a7b30"/><rect x="932.83" y="76.77" width="5.400" height="5.400" fill="#007236"/><rect x="939.09" y="76.77" width="5.400" height="5.400" fill="#00746b"/><rect x="945.35" y="76.77" width="5.400" height="5.400" fill="#0076a3"/><rect x="951.61" y="76.77" width="5.400" height="5.400" fill="#004b80"/><rect x="957.87" y="76.77" width="5.400" height="5.400" fill="#003471"/><rect x="964.13" y="76.77" width="5.400" height="5.400" fill="#1b1464"/><rect x="970.39" y="76.77" width="5.400" height="5.400" fill="#440e62"/><rect x="976.65" y="76.77" width="5.400" height="5.400" fill="#630460"/><rect x="982.91" y="76.77" width="5.400" height="5.400" fill="#9e005d"/><rect x="870.23" y="83.03" width="5.400" height="5.400" fill="#9e0039"/><rect x="876.49" y="83.03" width="5.400" height="5.400" fill="#790000"/><rect x="882.75" y="83.03" width="5.400" height="5.400" fill="#7b2e00"/><rect x="889.01" y="83.03" width="5.400" height="5.400" fill="#7d4900"/><rect x="895.27" y="83.03" width="5.400" height="5.400" fill="#827b00"/><rect x="901.53" y="83.03" width="5.400" height="5.400" fill="#406618"/><rect x="907.79" y="83.03" width="5.400" height="5.400" fill="#005e20"/><rect x="914.05" y="83.03" width="5.400" height="5.400" fill="#005826"/><rect x="920.31" y="83.03" width="5.400" height="5.400" fill="#005952"/><rect x="926.57" y="83.03" width="5.400" height="5.400" fill="#005b7f"/><rect x="932.83" y="83.03" width="5.400" height="5.400" fill="#003663"/><rect x="939.09" y="83.03" width="5.400" height="5.400" fill="#002157"/><rect x="945.35" y="83.03" width="5.400" height="5.400" fill="#0d004c"/><rect x="951.61" y="83.03" width="5.400" height="5.400" fill="#32004b"/><rect x="957.87" y="83.03" width="5.400" height="5.400" fill="#4b0049"/><rect x="964.13" y="83.03" width="5.400" height="5.400" fill="#7b0046"/><rect x="970.39" y="83.03" width="5.400" height="5.400" fill="#7a0026"/><rect x="976.65" y="83.03" width="5.400" height="5.400" fill="#c7b299"/><rect x="982.91" y="83.03" width="5.400" height="5.400" fill="#998675"/><rect x="870.23" y="89.29" width="5.400" height="5.400" fill="#736357"/><rect x="876.49" y="89.29" width="5.400" height="5.400" fill="#534741"/><rect x="882.75" y="89.29" width="5.400" height="5.400" fill="#362f2d"/><rect x="889.01" y="89.29" width="5.400" height="5.400" fill="#c69c6d"/><rect x="895.27" y="89.29" width="5.400" height="5.400" fill="#a67c52"/><rect x="901.53" y="89.29" width="5.400" height="5.400" fill="#8c6239"/><rect x="907.79" y="89.29" width="5.400" height="5.400" fill="#754c24"/><rect x="914.05" y="89.29" width="5.400" height="5.400" fill="#603913"/></svg>
<div style="left:988.8px;top:50.5px;width:8.5px;height:165.0px;background:linear-gradient(90deg,#dcdcdc,#ececec);border-left:0.5px solid #bbb"></div>
<svg class="abs" style="left:989px;top:52px" width="8" height="165" viewBox="0 0 8 165"><path d="M2.600 5.600L4.200 3.400L5.800 5.600z" fill="#9a9a9a"/><path d="M2.600 157.400L4.200 159.600L5.800 157.400z" fill="#777"/></svg>
<div style="left:868.8px;top:215.4px;width:128.5px;height:0.6px;background:#a8a8a8;"></div>
<div style="left:868.8px;top:216.0px;width:128.5px;height:7.4px;background:linear-gradient(#d9d9d9,#cfcfcf);"></div>
<svg class="abs" style="left:960px;top:216px" width="38" height="8" viewBox="960 216 38 8"><rect x="965.500" y="218" width="4.600" height="4.400" fill="#f2f2f2" stroke="#666" stroke-width="0.600"/><path d="M965.500 222.400l2.200-2v2z" fill="#444"/><path d="M978 218.400h4.400M978.600 218.400l.4 4.200h2.400l.4-4.200" stroke="#777" stroke-width="0.700" fill="none"/><path d="M991 222.800l4.600-4.600M993 222.800l2.600-2.600" stroke="#aaa" stroke-width="0.500"/></svg>
<!-- character panel -->
<div style="left:868.8px;top:224.0px;width:128.5px;height:132.0px;background:#d6d6d6;"></div>
<div style="left:868.8px;top:224.2px;width:128.5px;height:9.6px;background:linear-gradient(#868686,#7b7b7b);border-top:1.100px solid #3c3c3c"></div><div style="left:869.0px;top:225.3px;width:17.6px;height:8.7px;background:linear-gradient(#e2e2e2,#d8d8d8);border-right:0.6px solid #6a6a6a"></div><div class="t " style="left:871.6px;top:224.7px;color:#222;font-size:6.100px">字符</div><div style="left:886.6px;top:226.1px;width:18.4px;height:7.7px;background:linear-gradient(#999999,#8c8c8c);border-right:0.6px solid #6a6a6a;border-top:0.5px solid #a8a8a8"></div><div class="t " style="left:889.6px;top:225.0px;color:#3c3c3c;font-size:6.100px">段落</div><svg class="abs" style="left:989px;top:226.2px" width="8" height="6" viewBox="0 0 8 6"><path d="M1.200 1.500h2.600l-1.300 1.700z" fill="#333"/><path d="M4.400 1.200h3M4.400 2.400h3M4.400 3.600h3" stroke="#333" stroke-width="0.600"/></svg>
<div style="left:872.2px;top:237.8px;width:63.4px;height:9.7px;background:#fff;border:0.5px solid #c6c6c6;border-top-color:#acacac"></div><div class="t " style="left:874.4px;top:237.8px;color:#222;font-size:6px">微软雅黑</div>
<svg class="abs" style="left:928.3px;top:241.0px" width="6" height="4" viewBox="0 0 6 4"><path d="M1 .8h4L3 3.400z" fill="#1a1a1a"/></svg>
<div style="left:938.7px;top:237.8px;width:38.8px;height:9.7px;background:#fff;border:0.5px solid #c6c6c6;border-top-color:#acacac"></div><div class="t " style="left:940.9px;top:237.8px;color:#222;font-size:6px">Bold</div>
<svg class="abs" style="left:970.2px;top:241.0px" width="6" height="4" viewBox="0 0 6 4"><path d="M1 .8h4L3 3.400z" fill="#1a1a1a"/></svg>
<div style="left:885.4px;top:252.8px;width:28.0px;height:10.4px;background:#fff;border:0.5px solid #c6c6c6;border-top-color:#acacac"></div><div class="t " style="left:887.6px;top:253.2px;color:#222;font-size:6px">65 点</div>
<div style="left:913.4px;top:252.8px;width:10.3px;height:10.4px;background:linear-gradient(#f2f2f2,#d6d6d6);border:0.5px solid #9a9a9a"></div><svg class="abs" style="left:915.5px;top:256.2px" width="6" height="4" viewBox="0 0 6 4"><path d="M1 .8h4L3 3.400z" fill="#1a1a1a"/></svg>
<div style="left:939.5px;top:252.8px;width:28.0px;height:10.4px;background:#fff;border:0.5px solid #c6c6c6;border-top-color:#acacac"></div><div class="t " style="left:941.7px;top:253.2px;color:#222;font-size:6px">(自动)</div>
<div style="left:967.5px;top:252.8px;width:10.3px;height:10.4px;background:linear-gradient(#f2f2f2,#d6d6d6);border:0.5px solid #9a9a9a"></div><svg class="abs" style="left:969.6px;top:256.2px" width="6" height="4" viewBox="0 0 6 4"><path d="M1 .8h4L3 3.400z" fill="#1a1a1a"/></svg>
<div style="left:885.4px;top:266.0px;width:28.2px;height:9.3px;background:#fff;border:0.5px solid #c6c6c6;border-top-color:#acacac"></div><div class="t " style="left:887.6px;top:265.8px;color:#222;font-size:6px">100%</div>
<div style="left:939.5px;top:266.0px;width:28.0px;height:9.3px;background:#fff;border:0.5px solid #c6c6c6;border-top-color:#acacac"></div><div class="t " style="left:941.7px;top:265.8px;color:#222;font-size:6px">100%</div>
<div style="left:872.0px;top:278.0px;width:105.0px;height:0.6px;background:#bdbdbd;"></div>
<div style="left:885.4px;top:280.8px;width:28.0px;height:9.6px;background:#fff;border:0.5px solid #c6c6c6;border-top-color:#acacac"></div><div class="t " style="left:887.6px;top:280.8px;color:#222;font-size:6px">0%</div>
<div style="left:913.4px;top:280.8px;width:10.3px;height:9.6px;background:linear-gradient(#f2f2f2,#d6d6d6);border:0.5px solid #9a9a9a"></div><svg class="abs" style="left:915.5px;top:283.8px" width="6" height="4" viewBox="0 0 6 4"><path d="M1 .8h4L3 3.400z" fill="#1a1a1a"/></svg>
<div style="left:885.4px;top:293.4px;width:28.0px;height:9.6px;background:#fff;border:0.5px solid #c6c6c6;border-top-color:#acacac"></div><div class="t " style="left:887.6px;top:293.4px;color:#222;font-size:6px">0</div>
<div style="left:913.4px;top:293.4px;width:10.3px;height:9.6px;background:linear-gradient(#f2f2f2,#d6d6d6);border:0.5px solid #9a9a9a"></div><svg class="abs" style="left:915.5px;top:296.4px" width="6" height="4" viewBox="0 0 6 4"><path d="M1 .8h4L3 3.400z" fill="#1a1a1a"/></svg>
<div style="left:939.5px;top:293.4px;width:28.0px;height:9.6px;background:#dedede;border:0.5px solid #c6c6c6;border-top-color:#acacac"></div>
<div style="left:967.5px;top:293.4px;width:10.3px;height:9.6px;background:linear-gradient(#f2f2f2,#d6d6d6);border:0.5px solid #9a9a9a"></div><svg class="abs" style="left:969.6px;top:296.4px" width="6" height="4" viewBox="0 0 6 4"><path d="M1 .8h4L3 3.400z" fill="#1a1a1a"/></svg>
<div style="left:885.4px;top:308.8px;width:28.2px;height:9.2px;background:#fff;border:0.5px solid #c6c6c6;border-top-color:#acacac"></div><div class="t " style="left:887.6px;top:308.6px;color:#222;font-size:6px">0 点</div>
<div class="t " style="left:924.3px;top:309.6px;color:#222;font-size:6px">颜色:</div>
<div style="left:940.0px;top:308.8px;width:27.6px;height:9.2px;background:#000;"></div>
<div style="left:872.0px;top:320.3px;width:105.0px;height:0.6px;background:#bdbdbd;"></div>
<div style="left:872.0px;top:336.7px;width:105.0px;height:0.6px;background:#bdbdbd;"></div>
<div style="left:871.8px;top:340.6px;width:54.4px;height:10.0px;background:#fff;border:0.5px solid #c6c6c6;border-top-color:#acacac"></div><div class="t " style="left:874.4px;top:340.8px;color:#222;font-size:6px">美国英语</div>
<svg class="abs" style="left:918.6px;top:344.0px" width="6" height="4" viewBox="0 0 6 4"><path d="M1 .8h4L3 3.400z" fill="#1a1a1a"/></svg>
<div style="left:941.9px;top:340.6px;width:26.6px;height:10.0px;background:#fff;border:0.5px solid #c6c6c6;border-top-color:#acacac"></div><div class="t " style="left:944.3px;top:340.8px;color:#222;font-size:6px">浑厚</div>
<svg class="abs" style="left:961.3px;top:344.0px" width="6" height="4" viewBox="0 0 6 4"><path d="M1 .8h4L3 3.400z" fill="#1a1a1a"/></svg>
<svg class="abs" style="left:869px;top:250px" width="120" height="100" viewBox="869 250 120 100"><g font-family="Liberation Serif,serif" font-weight="bold" fill="#3c3c3c"><text x="873.800" y="261" font-size="6.500">T</text><text x="877.600" y="261.200" font-size="9">T</text><text x="928.200" y="258.500" font-size="5.500">A</text><text x="928.200" y="263" font-size="5.500">A</text><path d="M933.600 254.500v8M932.600 255.500l1-1.300 1 1.300zM932.600 261.500l1 1.300 1-1.300z" stroke="#333" stroke-width="0.500" fill="#333"/><text x="876.600" y="274" font-size="8.500">T</text><path d="M874.800 267.500v7M873.800 268.600l1-1.300 1 1.300zM873.800 273.400l1 1.300 1-1.300z" stroke="#333" stroke-width="0.500" fill="#333"/><text x="929.200" y="272.500" font-size="9" textLength="7" lengthAdjust="spacingAndGlyphs">T</text><path d="M929 274.600h7.600" stroke="#333" stroke-width="0.800"/><text x="874.600" y="288.800" font-size="7">A</text><path d="M873.600 282v8M881 282v8" stroke="#444" stroke-width="0.600"/><text x="872.600" y="301" font-size="6" font-family="Liberation Sans,sans-serif">AV</text><path d="M873 302.600h7.600" stroke="#333" stroke-width="0.600"/><text x="927.600" y="300.500" font-size="6.500" font-family="Liberation Sans,sans-serif" font-weight="normal">AV</text><path d="M931.800 302.500l1-1.200 1 1.200z" fill="#333"/><text x="873" y="316.500" font-size="6" font-family="Liberation Sans,sans-serif">A</text><text x="877.300" y="313.500" font-size="4" font-family="Liberation Sans,sans-serif">a</text><path d="M879.600 314v3.600M878.800 316.600l.8 1 .8-1z" stroke="#333" stroke-width="0.500" fill="#333"/><text x="878.800" y="331.500" font-size="7.300">T</text><text x="890.300" y="331.500" font-size="7.300" font-style="italic" font-weight="normal">T</text><text x="903.600" y="331.500" font-size="7.300">TT</text><text x="915" y="331.500" font-size="7.300">T</text><text x="919.300" y="331.500" font-size="5.500">T</text><text x="926.600" y="331.500" font-size="7.300">T</text><text x="931" y="328.500" font-size="4">1</text><text x="937.800" y="331.500" font-size="7.300">T</text><text x="942.200" y="332.600" font-size="4">1</text><text x="953.600" y="330.800" font-size="7.300">T</text><path d="M953.400 332.200h5" stroke="#333" stroke-width="0.700"/><text x="965" y="331.500" font-size="7.300" fill="#555">T</text><path d="M964.600 328.700h5.400" stroke="#444" stroke-width="0.700"/><text x="932.500" y="347" font-size="5" font-family="Liberation Sans,sans-serif">a</text><text x="935.300" y="348" font-size="6" font-family="Liberation Sans,sans-serif">a</text></g></svg>
<!-- layers panel -->
<div style="left:868.8px;top:356.0px;width:128.5px;height:96.0px;background:#d6d6d6;"></div>
<div style="left:868.8px;top:355.4px;width:128.5px;height:10.8px;background:linear-gradient(#868686,#7b7b7b);border-top:1.100px solid #3c3c3c"></div><div style="left:869.0px;top:356.5px;width:17.4px;height:9.9px;background:linear-gradient(#e2e2e2,#d8d8d8);border-right:0.6px solid #6a6a6a"></div><div class="t " style="left:871.5px;top:356.5px;color:#222;font-size:6.100px">图层</div><div style="left:886.4px;top:357.3px;width:19.0px;height:8.9px;background:linear-gradient(#999999,#8c8c8c);border-right:0.6px solid #6a6a6a;border-top:0.5px solid #a8a8a8"></div><div class="t " style="left:889.7px;top:356.8px;color:#3c3c3c;font-size:6.100px">通道</div><div style="left:905.4px;top:357.3px;width:18.8px;height:8.9px;background:linear-gradient(#999999,#8c8c8c);border-right:0.6px solid #6a6a6a;border-top:0.5px solid #a8a8a8"></div><div class="t " style="left:908.6px;top:356.8px;color:#3c3c3c;font-size:6.100px">路径</div><svg class="abs" style="left:989px;top:357.4px" width="8" height="6" viewBox="0 0 8 6"><path d="M1.200 1.500h2.600l-1.300 1.700z" fill="#333"/><path d="M4.400 1.200h3M4.400 2.400h3M4.400 3.600h3" stroke="#333" stroke-width="0.600"/></svg>
<div style="left:870.9px;top:367.6px;width:63.0px;height:10.2px;background:#fff;border:0.5px solid #c6c6c6;border-top-color:#acacac"></div><div class="t " style="left:874.7px;top:367.9px;color:#222;font-size:6px">正常</div>
<svg class="abs" style="left:926.8px;top:370.5px" width="6" height="4" viewBox="0 0 6 4"><path d="M1 .8h4L3 3.400z" fill="#1a1a1a"/></svg>
<div class="t " style="left:936.2px;top:367.3px;color:#222;font-size:6px;letter-spacing:-0.350px">不透明度:</div>
<div style="left:964.2px;top:367.4px;width:22.2px;height:9.7px;background:#fff;border:0.5px solid #c6c6c6;border-top-color:#acacac"></div><div class="t " style="left:966.0px;top:367.4px;color:#222;font-size:6px">100%</div>
<div style="left:986.8px;top:367.4px;width:7.6px;height:9.7px;background:linear-gradient(#ededed,#d4d4d4);border:0.5px solid #a2a2a2"></div>
<div style="left:868.8px;top:380.0px;width:128.5px;height:0.6px;background:#c2c2c2;"></div>
<div class="t " style="left:872.4px;top:382.0px;color:#222;font-size:6px">锁定:</div>
<div class="t " style="left:949.6px;top:382.0px;color:#222;font-size:6px">填充:</div>
<div style="left:964.2px;top:382.3px;width:22.2px;height:9.3px;background:#fff;border:0.5px solid #c6c6c6;border-top-color:#acacac"></div><div class="t " style="left:966.0px;top:382.1px;color:#222;font-size:6px">100%</div>
<div style="left:986.8px;top:382.3px;width:7.6px;height:9.3px;background:linear-gradient(#ededed,#d4d4d4);border:0.5px solid #a2a2a2"></div>
<svg class="abs" style="left:886px;top:366px" width="112" height="30" viewBox="886 366 112 30"><path d="M989.800 371.400l1.700 2 1.700-2z" fill="#8a8a8a"/><path d="M989.800 386l1.700 2 1.700-2z" fill="#c9a04a"/><rect x="889.800" y="383.800" width="5.600" height="5.600" fill="#f6f6f6" stroke="#777" stroke-width="0.600"/><path d="M889.800 386.600h5.600M892.600 383.800v5.600" stroke="#d0d0d0" stroke-width="0.500"/><path d="M899.600 390.200l1-1.800 3.400-3.600 1.200 1-3.400 3.600z" fill="#333"/><path d="M911.700 383.600v6.400M908.500 386.800h6.400" stroke="#333" stroke-width="0.700"/><path d="M911.700 382.900l-1 1.200h2zM911.700 390.700l-1-1.200h2zM907.800 386.800l1.200-1v2zM915.600 386.800l-1.200-1v2z" fill="#333"/><rect x="919.400" y="386.400" width="4.800" height="3.800" fill="#2e2e2e"/><path d="M920.400 386.400v-1.300a1.400 1.400 0 0 1 2.800 0v1.300" stroke="#2e2e2e" stroke-width="0.800" fill="none"/></svg>
<div style="left:868.8px;top:393.0px;width:128.5px;height:0.6px;background:#a0a0a0;"></div>
<div style="left:869.3px;top:393.6px;width:11.5px;height:28.3px;background:#d9d9d9;border-right:0.5px solid #b0b0b0"></div>
<div style="left:881.0px;top:393.3px;width:107.8px;height:14.6px;background:#3795f5;"></div>
<div style="left:868.8px;top:407.8px;width:120.0px;height:0.6px;background:#b4b4b4;"></div>
<div style="left:868.8px;top:421.7px;width:120.0px;height:0.6px;background:#b4b4b4;"></div>
<div style="left:883.2px;top:394.5px;width:17.2px;height:11.8px;background:#fff;border:0.8px solid #223a66"></div>
<div style="left:883.2px;top:409.0px;width:17.2px;height:11.6px;background:linear-gradient(#c4e0e6,#aacfd8);border:0.8px solid #2e3c44"></div>
<div style="left:889.0px;top:412.8px;width:6.5px;height:3.6px;background:#e4f0f2;border-radius:1.500px"></div>
<div class="t w" style="left:904.0px;top:395.7px;font-size:6.100px">图层 1</div>
<div class="t " style="left:904.0px;top:410.0px;color:#111;font-size:6.100px">图层 0</div>
<svg class="abs" style="left:871.400px;top:397.8px" width="8" height="6" viewBox="0 0 8 6"><path d="M.3 3C2 .6 6 .6 7.700 3 6 5.200 2 5.200.3 3z" fill="#222"/><circle cx="4" cy="2.700" r="1" fill="#888"/></svg>
<svg class="abs" style="left:871.400px;top:411.9px" width="8" height="6" viewBox="0 0 8 6"><path d="M.3 3C2 .6 6 .6 7.700 3 6 5.200 2 5.200.3 3z" fill="#222"/><circle cx="4" cy="2.700" r="1" fill="#888"/></svg>
<div style="left:988.8px;top:393.6px;width:8.5px;height:58.4px;background:linear-gradient(90deg,#dedede,#eeeeee);border-left:0.5px solid #bbb"></div>
<svg class="abs" style="left:989px;top:394px" width="8" height="8" viewBox="0 0 8 8"><path d="M2.600 5L4.200 2.800L5.800 5z" fill="#9a9a9a"/></svg>
<svg class="abs" style="left:986px;top:414px;z-index:20" width="14" height="30" viewBox="986 414 14 30"><defs><radialGradient id="gb" cx="0.400" cy="0.350" r="0.700"><stop offset="0" stop-color="#6fe07f"/><stop offset="1" stop-color="#2fb247"/></radialGradient></defs><circle cx="1002.300" cy="428.500" r="11.600" fill="#d6f3da"/><circle cx="1002.300" cy="428.500" r="10.600" fill="url(#gb)"/><path d="M994 428c2-1.400 4-1.600 6.500-.6" stroke="#eafbea" stroke-width="1" fill="none"/></svg>
</div>
</body>
</html>
